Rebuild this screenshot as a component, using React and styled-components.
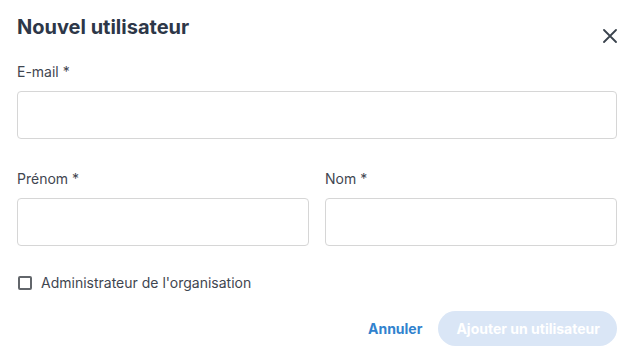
import React from 'react';
import styled, { createGlobalStyle } from 'styled-components';

const GlobalStyle = createGlobalStyle`
  body {
    margin: 0;
    background: #ffffff;
    font-family: Inter, "Noto Sans", sans-serif;
  }
`;

const Dialog = styled.div`
  padding: 13px 22px 16px 17px;
  display: flex;
  flex-direction: column;
`;

const Header = styled.div`
  display: flex;
  justify-content: space-between;
  align-items: flex-start;
`;

const Title = styled.h1`
  margin: 0;
  font-size: 20px;
  line-height: 28px;
  font-weight: 700;
  color: #2d3748;
`;

const CloseButton = styled.button`
  margin-top: 16px;
  padding: 0;
  border: none;
  background: none;
  width: 14px;
  height: 14px;
  display: flex;
  cursor: pointer;
`;

const Field = styled.label`
  display: flex;
  flex-direction: column;
  margin-top: ${(p) => p.$top}px;
`;

const Label = styled.span`
  font-size: 14px;
  line-height: 20px;
  color: #3f4650;
  margin-bottom: 9px;
`;

const Input = styled.input`
  box-sizing: border-box;
  height: 48px;
  width: 100%;
  border: 1px solid #d6d6d6;
  border-radius: 4px;
  font: inherit;
  padding: 0 12px;
  outline: none;
`;

const Row = styled.div`
  display: grid;
  grid-template-columns: 1fr 1fr;
  column-gap: 16px;
  margin-top: 30px;
`;

const CheckRow = styled.label`
  display: flex;
  align-items: center;
  gap: 9px;
  margin-top: 27px;
  padding-left: 1px;
  font-size: 14px;
  line-height: 20px;
  color: #3f4650;
`;

const Box = styled.span`
  box-sizing: border-box;
  width: 14px;
  height: 14px;
  border: 2px solid #62666b;
  border-radius: 2px;
`;

const Actions = styled.div`
  display: flex;
  justify-content: flex-end;
  align-items: center;
  gap: 16px;
  margin-top: 18px;
`;

const LinkButton = styled.button`
  border: none;
  background: none;
  padding: 0;
  font: inherit;
  font-size: 14px;
  font-weight: 700;
  color: #3182ce;
  cursor: pointer;
`;

const PrimaryButton = styled.button`
  height: 35px;
  padding: 0 17px 0 18px;
  border: none;
  border-radius: 18px;
  background: #dae6f6;
  color: #ffffff;
  font: inherit;
  font-size: 14px;
  font-weight: 700;
`;

export default function App() {
  return (
    <Dialog>
      <GlobalStyle />
      <Header>
        <Title>Nouvel utilisateur</Title>
        <CloseButton aria-label="Fermer">
          <svg width="14" height="14" viewBox="0 0 14 14">
            <path d="M1 1L13 13M13 1L1 13" stroke="#3a434d" strokeWidth="1.8" strokeLinecap="round" />
          </svg>
        </CloseButton>
      </Header>
      <Field $top={19}>
        <Label>E-mail *</Label>
        <Input type="email" />
      </Field>
      <Row>
        <Field $top={0}>
          <Label>Prénom *</Label>
          <Input type="text" />
        </Field>
        <Field $top={0}>
          <Label>Nom *</Label>
          <Input type="text" />
        </Field>
      </Row>
      <CheckRow>
        <Box />
        Administrateur de l'organisation
      </CheckRow>
      <Actions>
        <LinkButton>Annuler</LinkButton>
        <PrimaryButton disabled>Ajouter un utilisateur</PrimaryButton>
      </Actions>
    </Dialog>
  );
}
